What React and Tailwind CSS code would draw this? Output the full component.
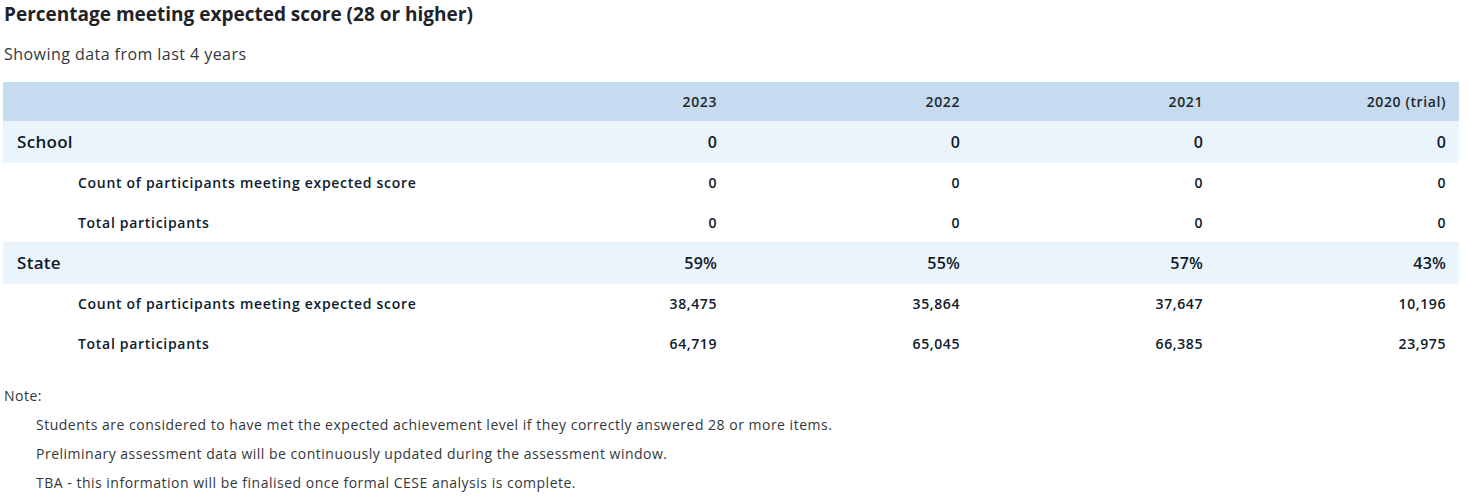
const years = ['2023', '2022', '2021', '2020 (trial)']

const groups = [
  {
    name: 'School',
    values: ['0', '0', '0', '0'],
    rows: [
      { label: 'Count of participants meeting expected score', values: ['0', '0', '0', '0'] },
      { label: 'Total participants', values: ['0', '0', '0', '0'] },
    ],
  },
  {
    name: 'State',
    values: ['59%', '55%', '57%', '43%'],
    rows: [
      { label: 'Count of participants meeting expected score', values: ['38,475', '35,864', '37,647', '10,196'] },
      { label: 'Total participants', values: ['64,719', '65,045', '66,385', '23,975'] },
    ],
  },
]

const notes = [
  'Students are considered to have met the expected achievement level if they correctly answered 28 or more items.',
  'Preliminary assessment data will be continuously updated during the assessment window.',
  'TBA - this information will be finalised once formal CESE analysis is complete.',
]

export default function App() {
  return (
    <div className="bg-white px-[3px] pt-[2px] text-[#22272b]" style={{ fontFamily: '"Open Sans", sans-serif' }}>
      <h2 className="pl-[1px] text-[19px] leading-[24px] font-bold text-[#1f2328]">
        Percentage meeting expected score (28 or higher)
      </h2>
      <p className="mt-[17px] pl-[1px] text-[16px] leading-[22px] tracking-[0.45px] text-[#33373b]">
        Showing data from last 4 years
      </p>

      <table className="mt-[17px] w-[1456px] border-collapse table-fixed text-[#0e1a2b]">
        <colgroup>
          <col className="w-[484px]" />
          <col className="w-[243px]" />
          <col className="w-[243px]" />
          <col className="w-[243px]" />
          <col className="w-[243px]" />
        </colgroup>
        <thead>
          <tr className="h-[39px] bg-[#c6dbf0]">
            <th />
            {years.map((y) => (
              <th key={y} className="pr-[13px] text-right text-[14px] font-semibold tracking-[0.6px] text-[#22272b]">
                {y}
              </th>
            ))}
          </tr>
        </thead>
        <tbody>
          {groups.map((g) => (
            <>
              <tr key={g.name} className="h-[42px] bg-[#ebf3fb]">
                <td className="pl-[14px] text-[17px] font-semibold tracking-[0.3px]">{g.name}</td>
                {g.values.map((v, i) => (
                  <td key={i} className="pr-[13px] text-right text-[16px] font-semibold tracking-[0.2px]">
                    {v}
                  </td>
                ))}
              </tr>
              {g.rows.map((r) => (
                <tr key={g.name + r.label} className="h-[39.5px]">
                  <td className="pl-[75px] text-[14px] font-semibold tracking-[0.7px]">{r.label}</td>
                  {r.values.map((v, i) => (
                    <td key={i} className="pr-[13px] text-right text-[14px] font-semibold tracking-[0.6px]">
                      {v}
                    </td>
                  ))}
                </tr>
              ))}
            </>
          ))}
        </tbody>
      </table>

      <div className="mt-[18px] text-[14px] leading-[29px] tracking-[0.5px] text-[#33373b]">
        <p className="pl-[1px]">Note:</p>
        <ul className="pl-[33px]">
          {notes.map((n) => (
            <li key={n}>{n}</li>
          ))}
        </ul>
      </div>
    </div>
  )
}
